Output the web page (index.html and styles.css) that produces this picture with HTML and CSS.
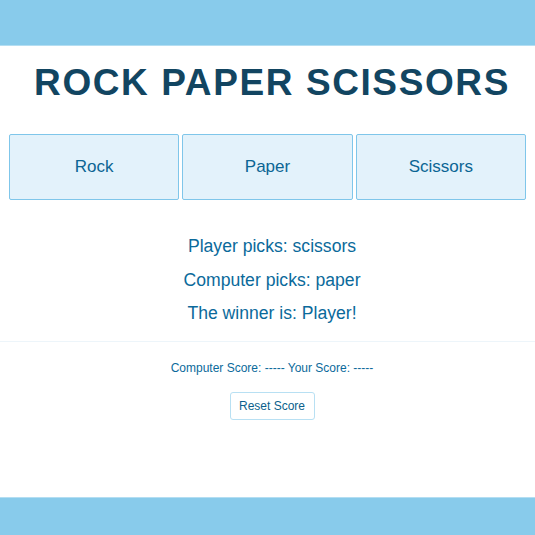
FILE: index.html
```html
<!DOCTYPE html>
<html>
<head>
<meta charset="utf-8">
<link rel="stylesheet" href="styles.css">
</head>
<body>
<div class="page">
  <header class="topbar"></header>
  <main class="main">
    <h1 class="title">ROCK PAPER SCISSORS</h1>
    <div class="choices">
      <button class="choice">Rock</button>
      <button class="choice">Paper</button>
      <button class="choice">Scissors</button>
    </div>
    <div class="results">
      <p class="line">Player picks: scissors</p>
      <p class="line">Computer picks: paper</p>
      <p class="line">The winner is: Player!</p>
    </div>
    <hr class="divider">
    <p class="score">Computer Score: ----- Your Score: -----</p>
    <div class="reset-wrap"><button class="reset">Reset Score</button></div>
  </main>
  <footer class="bottombar"></footer>
</div>
</body>
</html>
```
FILE: styles.css
```css
html, body {
  margin: 0;
  padding: 0;
  background: #ffffff;
  font-family: "Liberation Sans", Arial, sans-serif;
}
.page {
  display: flex;
  flex-direction: column;
  min-height: 100vh;
}
.topbar {
  height: 46px;
  background: #88cbeb;
  border-bottom: 1px solid #b4def2;
  box-sizing: border-box;
}
.main {
  flex: 1;
}
.title {
  margin: 14px 0 0;
  padding-left: 9px;
  text-align: center;
  font-size: 37px;
  line-height: 46px;
  font-weight: bold;
  letter-spacing: 1.6px;
  color: #124561;
  white-space: nowrap;
}
.choices {
  display: flex;
  gap: 3px;
  padding: 0 9px;
  margin-top: 28px;
}
.choice {
  flex: 1;
  height: 66px;
  background: #e3f2fb;
  border: 1px solid #7fc6ea;
  border-radius: 2px;
  font-family: "Liberation Sans", Arial, sans-serif;
  font-size: 17px;
  color: #0b6594;
  padding: 0;
}
.results {
  margin-top: 30px;
  padding-left: 9px;
  text-align: center;
}
.line {
  margin: 0;
  font-size: 17.6px;
  line-height: 33.5px;
  color: #0b6a9b;
}
.divider {
  margin: 10px 0 0;
  border: 0;
  border-top: 1px solid #edf5fa;
  height: 0;
}
.score {
  margin: 18px 0 0;
  padding-left: 9px;
  text-align: center;
  font-size: 12px;
  line-height: 16px;
  color: #0b6a9b;
}
.reset-wrap {
  display: flex;
  justify-content: center;
  padding-left: 9px;
  margin-top: 16px;
}
.reset {
  width: 85px;
  height: 28px;
  background: #ffffff;
  border: 1px solid #b8e0f3;
  border-radius: 3px;
  font-family: "Liberation Sans", Arial, sans-serif;
  font-size: 12px;
  color: #0b5f8c;
  padding: 0;
}
.bottombar {
  height: 38px;
  background: #88cbeb;
  border-top: 1px solid #b4def2;
  box-sizing: border-box;
}
```
